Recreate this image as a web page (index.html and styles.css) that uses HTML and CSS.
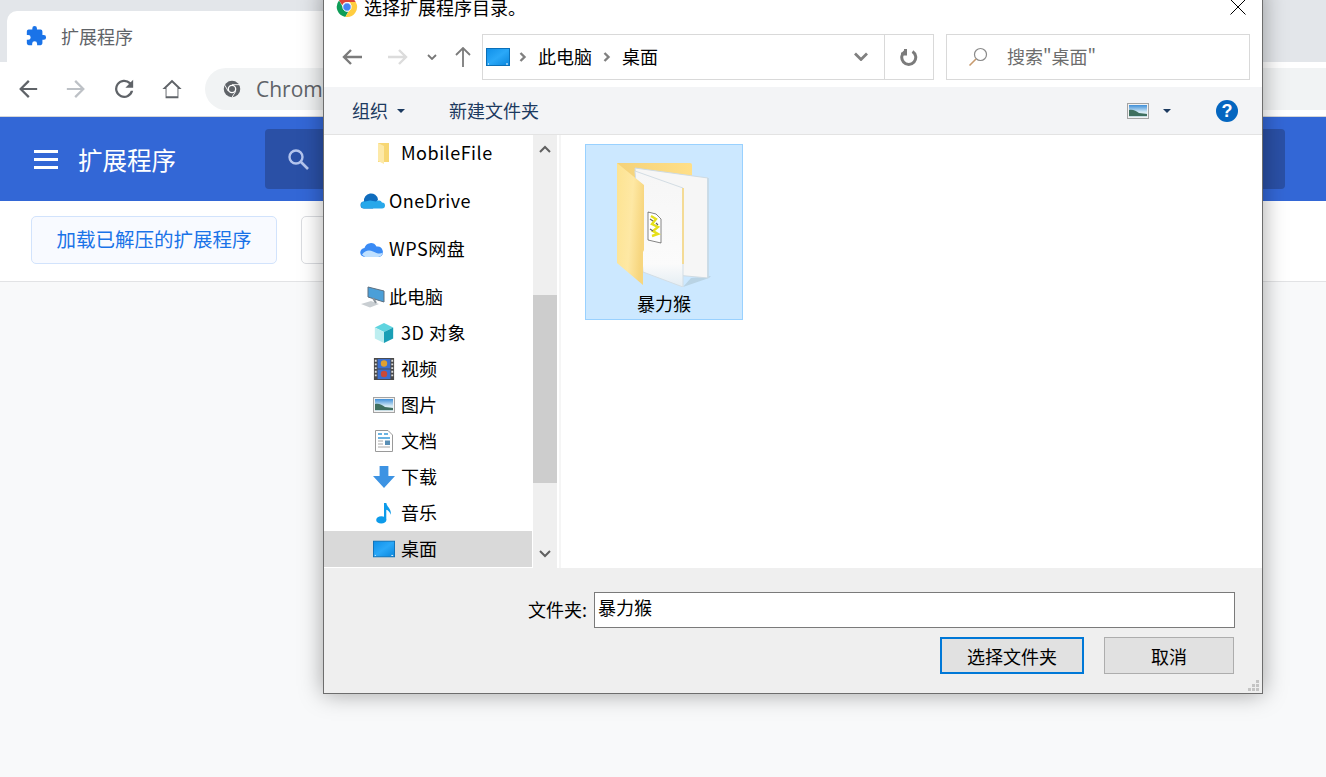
FILE: index.html
```html
<!DOCTYPE html>
<html lang="zh-CN">

<head>
    <meta charset="UTF-8">
    <meta name="viewport" content="width=device-width, initial-scale=1.0">
    <link rel="stylesheet" href="styles.css">
    <title>扩展程序</title>
</head>

<body>
    <svg class="defs" width="0" height="0">
        <defs>
            <linearGradient id="deskFill" x1="0" y1="0" x2="1" y2="1">
                <stop offset="0" stop-color="#0f8fe8" />
                <stop offset="0.5" stop-color="#2aa8f8" />
                <stop offset="1" stop-color="#0a86dc" />
            </linearGradient>
            <linearGradient id="skyFill" x1="0" y1="0" x2="0" y2="1">
                <stop offset="0" stop-color="#3f8fd8" />
                <stop offset="0.6" stop-color="#d8ecf5" />
                <stop offset="1" stop-color="#c4dbe2" />
            </linearGradient>
            <linearGradient id="flapFill" x1="0" y1="0" x2="1" y2="0.3">
                <stop offset="0" stop-color="#fde391" />
                <stop offset="0.6" stop-color="#fee8a4" />
                <stop offset="1" stop-color="#f7d67f" />
            </linearGradient>
            <linearGradient id="backFill" x1="0" y1="0" x2="1" y2="0">
                <stop offset="0" stop-color="#f4d27a" />
                <stop offset="1" stop-color="#ffdf88" />
            </linearGradient>
            <linearGradient id="pageFill" x1="0" y1="0" x2="0" y2="1">
                <stop offset="0" stop-color="#f6f6f6" />
                <stop offset="0.8" stop-color="#fbfbfb" />
                <stop offset="1" stop-color="#e4edf3" />
            </linearGradient>
            <symbol id="desk" viewBox="0 0 24 18">
                <rect x="0.5" y="0.5" width="23" height="17" fill="url(#deskFill)" stroke="#0a6fb8" />
                <path d="M2 16h1M20 16h2" stroke="#fff" />
            </symbol>
            <symbol id="photo" viewBox="0 0 22 16">
                <rect x="0.5" y="0.5" width="21" height="15" fill="#f2f2f2" stroke="#a3a3a3" />
                <rect x="2" y="2" width="18" height="12" fill="url(#skyFill)" />
                <path d="M2 7c4-1 7 1 10 3l8 1v2H2z" fill="#3f6f5f" />
            </symbol>
        </defs>
    </svg>

    <div class="browser">
        <div class="tabstrip">
            <div class="tab">
                <svg class="tab-icon" viewBox="0 0 24 24">
                    <path fill="#1a73e8" d="M20.500 11H19V7a2 2 0 0 0-2-2h-4V3.500a2.500 2.500 0 0 0-5 0V5H4a2 2 0 0 0-2 2v3.800h1.500a2.700 2.700 0 0 1 0 5.400H2V20a2 2 0 0 0 2 2h3.800v-1.500a2.700 2.700 0 0 1 5.400 0V22H17a2 2 0 0 0 2-2v-4h1.500a2.500 2.500 0 0 0 0-5z" />
                </svg>
                <span class="tab-title">扩展程序</span>
            </div>
        </div>
        <div class="toolbar">
            <svg class="nav-icon" viewBox="0 0 24 24"><path fill="#5f6368" d="M22 11H6.800l7-7L12 2.300 2.300 12 12 21.700l1.800-1.700-7-7H22z" /></svg>
            <svg class="nav-icon" viewBox="0 0 24 24"><path fill="#bdc1c6" d="M2 11h15.200l-7-7L12 2.300 21.700 12 12 21.700 10.200 20l7-7H2z" /></svg>
            <svg class="nav-icon" viewBox="0 0 24 24"><path fill="#5f6368" d="M19.300 4.700A10 10 0 1 0 22 14h-2.600a7.500 7.500 0 1 1-1.900-7.500L13.500 10.500H22V2z" /></svg>
            <svg class="nav-icon" viewBox="0 0 24 24"><path fill="#5f6368" d="M12 2 1.500 12H5v10h14V12h3.500zm0 3 6 5.700V20H6v-9.300z" /></svg>
            <div class="omnibox">
                <svg class="omni-icon" viewBox="0 0 24 24">
                    <circle cx="12" cy="12" r="11" fill="#5f6368" />
                    <circle cx="12" cy="12" r="5.800" fill="#fff" />
                    <circle cx="12" cy="12" r="4" fill="#5f6368" />
                    <path d="M12 6.200h10M7 15 2.500 7M17 15l-5 8" stroke="#fff" stroke-width="1.200" />
                </svg>
                <span class="omni-text">Chrome</span>
            </div>
        </div>
        <header class="ext-header">
            <div class="menu-btn"><span></span><span></span><span></span></div>
            <h1 class="ext-title">扩展程序</h1>
            <div class="ext-search">
                <svg class="search-icon" viewBox="0 0 24 24">
                    <circle cx="10" cy="10" r="6.500" fill="none" stroke="#b4c5ee" stroke-width="2.400" />
                    <path d="m15 15 7 7" stroke="#b4c5ee" stroke-width="2.600" />
                </svg>
            </div>
        </header>
        <div class="ext-actions">
            <button class="ext-btn ext-btn-first">加载已解压的扩展程序</button>
            <button class="ext-btn"></button>
        </div>
    </div>

    <div class="dialog">
        <div class="dlg-title">
            <svg class="dlg-logo" viewBox="0 0 24 24">
                <path fill="#db4437" d="M12 1a11 11 0 0 1 9.500 5.500H12a5.500 5.500 0 0 0-5.200 3.700L3.300 5A11 11 0 0 1 12 1z" />
                <path fill="#0f9d58" d="M3.300 5l4.800 8.400A5 5 0 0 0 13.500 17l-3.300 5.800A11 11 0 0 1 3.300 5z" />
                <path fill="#ffcd40" d="M21.500 6.500A11 11 0 0 1 10.200 22.800l4.800-8.300a5 5 0 0 0-.6-8z" />
                <circle cx="12" cy="12" r="4.600" fill="#4285f4" stroke="#fff" stroke-width="1" />
            </svg>
            <span class="dlg-title-text">选择扩展程序目录。</span>
            <svg class="dlg-close" viewBox="0 0 16 16"><path d="M.5.500l15 15M15.500.500l-15 15" stroke="#000" stroke-width="1" /></svg>
        </div>

        <div class="dlg-nav">
            <svg class="dlg-arrow" viewBox="0 0 20 16"><path d="M9 1 2 8l7 7M2 8h18" fill="none" stroke="#7b7b7b" stroke-width="2.400" /></svg>
            <svg class="dlg-arrow dlg-arrow-next" viewBox="0 0 20 16"><path d="m11 1 7 7-7 7M18 8H0" fill="none" stroke="#dcdcdc" stroke-width="2.400" /></svg>
            <svg class="dlg-recent" viewBox="0 0 10 6"><path d="m1 1 4 4 4-4" fill="none" stroke="#777" stroke-width="1.800" /></svg>
            <svg class="dlg-up" viewBox="0 0 16 20"><path d="M1 8l7-7 7 7M8 1v19" fill="none" stroke="#7b7b7b" stroke-width="1.800" /></svg>
            <div class="crumbs">
                <svg class="crumb-desk"><use href="#desk" /></svg>
                <svg class="crumb-sep" viewBox="0 0 8 10"><path d="m1.500 1 4 4-4 4" fill="none" stroke="#808080" stroke-width="2.400" /></svg>
                <span class="crumb">此电脑</span>
                <svg class="crumb-sep" viewBox="0 0 8 10"><path d="m1.500 1 4 4-4 4" fill="none" stroke="#808080" stroke-width="2.400" /></svg>
                <span class="crumb">桌面</span>
                <svg class="crumb-drop" viewBox="0 0 14 9"><path d="m1 1.500 6 6 6-6" fill="none" stroke="#808080" stroke-width="2.800" /></svg>
                <div class="crumb-refresh">
                    <svg viewBox="0 0 18 18" width="18" height="18"><path d="M5 3.500a7 7 0 1 0 7.500 0M5.500 1v5H1" fill="none" stroke="#7b7b7b" stroke-width="3" /></svg>
                </div>
            </div>
            <div class="dlg-search">
                <svg class="dlg-search-icon" viewBox="0 0 20 20"><circle cx="12.500" cy="7.500" r="6" fill="none" stroke="#8a8a8a" stroke-width="1.200" /><path d="M8 12 1.500 18.500" stroke="#c79a6e" stroke-width="1.600" /></svg>
                <span class="dlg-search-text">搜索"桌面"</span>
            </div>
        </div>

        <div class="dlg-commands">
            <span class="cmd">组织</span>
            <span class="cmd-caret"></span>
            <span class="cmd cmd-new">新建文件夹</span>
            <svg class="cmd-view"><use href="#photo" /></svg>
            <span class="cmd-caret cmd-caret-view"></span>
            <span class="cmd-help">?</span>
        </div>

        <div class="dlg-main">
            <ul class="tree">
                <li class="tree-row tree-sub tree-gap tree-latin">
                    <svg class="tree-icon" viewBox="0 0 20 22"><path d="M4 1h11v19H4z" fill="#f7d774" /><path d="M4 1l6 3v18l-6-3z" fill="#fde9a8" /></svg>
                    MobileFile
                </li>
                <li class="tree-row tree-top tree-gap tree-latin">
                    <svg class="tree-icon tree-icon-wide" viewBox="0 0 25 15"><path d="M4 8a7 7 0 0 1 14-2l-5 9H4a3.500 3.500 0 0 1 0-7z" fill="#0f6cbd" /><path d="M4 15a3.500 3.500 0 0 1 1-7l5-1 6 1a4 4 0 0 1 6 1 3 3 0 0 1 0 6z" fill="#28a8ea" /></svg>
                    OneDrive
                </li>
                <li class="tree-row tree-top tree-gap tree-latin">
                    <svg class="tree-icon tree-icon-wide" viewBox="0 0 25 17"><path d="M5 16.500a4.500 4.500 0 0 1-.5-9 6.500 6.500 0 0 1 12-1.500 5.500 5.500 0 0 1 3 10.500z" fill="#3a8bf5" /><path d="M2 14c3-4 7-5 11-3s7 3 10 1c-1 3-3 4.500-5 4.500H5z" fill="#bfe0ff" /></svg>
                    WPS网盘
                </li>
                <li class="tree-row tree-top">
                    <svg class="tree-icon tree-icon-wide" viewBox="0 0 25 22"><path d="M8 1l16 4v11L8 11z" fill="#4b9fd8" stroke="#5c6f80" /><path d="M1 18l10-3 8 3-9 3.500z" fill="#c9ced2" /><path d="M13 12l3 5" stroke="#8a9299" stroke-width="2" /></svg>
                    此电脑
                </li>
                <li class="tree-row tree-sub tree-latin">
                    <svg class="tree-icon" viewBox="0 0 24 24"><path d="M12 1l10 5-10 5L2 6z" fill="#5fd4df" /><path d="M2 6l10 5v12L2 18z" fill="#bdeef0" /><path d="M22 6 12 11v12l10-5z" fill="#1a9fb5" /></svg>
                    3D 对象
                </li>
                <li class="tree-row tree-sub">
                    <svg class="tree-icon" viewBox="0 0 22 24">
                        <rect width="22" height="24" fill="#4a4a4a" />
                        <rect x="4" y="1" width="14" height="10.500" fill="#3b6fd0" />
                        <rect x="4" y="12.500" width="14" height="10.500" fill="#3b6fd0" />
                        <circle cx="11" cy="6" r="3.500" fill="#e0a030" />
                        <circle cx="11" cy="17.500" r="3.500" fill="#c94a3a" />
                        <path d="M2 2v20M20 2v20" stroke="#ddd" stroke-width="2" stroke-dasharray="2 2" />
                    </svg>
                    视频
                </li>
                <li class="tree-row tree-sub">
                    <svg class="tree-icon"><use href="#photo" /></svg>
                    图片
                </li>
                <li class="tree-row tree-sub">
                    <svg class="tree-icon" viewBox="0 0 18 22">
                        <path d="M.5.500H13L17.500 5v16.500H.5z" fill="#fff" stroke="#9a9a9a" />
                        <path d="M3 4h4M9 4h4M3 8h12" stroke="#3a9ad9" stroke-width="1.500" />
                        <path d="M3 11h5M3 14h5M3 17h12" stroke="#a8a8a8" />
                        <rect x="10" y="10.500" width="5" height="4.500" fill="#5a8fb5" />
                    </svg>
                    文档
                </li>
                <li class="tree-row tree-sub">
                    <svg class="tree-icon" viewBox="0 0 20 20"><path d="M6 0h8v9h6L10 20 0 9h6z" fill="#3d93e3" /></svg>
                    下载
                </li>
                <li class="tree-row tree-sub">
                    <svg class="tree-icon" viewBox="0 0 18 24"><ellipse cx="6" cy="19.500" rx="5.500" ry="4" fill="#0d9bea" /><path d="M9 1h2.500c.5 4 5.500 6 5 13-1-3-3-5-5-5.500V20H9z" fill="#0d9bea" /></svg>
                    音乐
                </li>
                <li class="tree-row tree-sub tree-selected">
                    <svg class="tree-icon"><use href="#desk" /></svg>
                    桌面
                </li>
            </ul>
            <div class="tree-scroll">
                <svg class="scroll-arrow" viewBox="0 0 12 8"><path d="m1 7 5-5 5 5" fill="none" stroke="#606060" stroke-width="2" /></svg>
                <div class="scroll-track"><div class="scroll-thumb"></div></div>
                <svg class="scroll-arrow" viewBox="0 0 12 8"><path d="m1 1 5 5 5-5" fill="none" stroke="#606060" stroke-width="2" /></svg>
            </div>
            <div class="files">
                <div class="file-item">
                    <svg class="file-icon" viewBox="0 0 94 124">
                        <!-- back of the folder -->
                        <path d="M0 0h73a2 2 0 0 1 2 2v20H0z" fill="url(#backFill)" />
                        <!-- shadow, back page, front page -->
                        <path d="M66 124l26-9 2-2-20 2z" fill="#b9d3e4" />
                        <path d="M18 5l73 10v100l-65-6z" fill="#f6f6f6" stroke="#cfdbe3" />
                        <path d="M91 15v100" stroke="#c5d9e6" stroke-width="1.500" />
                        <path d="M18 8l48 17v99l-40-15z" fill="url(#pageFill)" stroke="#d3dde4" />
                        <path d="M66 25v76" stroke="#f8d678" stroke-width="1.500" />
                        <!-- front flap -->
                        <path d="M0 0l27 22v65l-1 2v33L0 100z" fill="url(#flapFill)" />
                        <!-- thumbnail of the script file -->
                        <path d="M31 49l8 2 5 5v24l-13-3z" fill="#fff" stroke="#333" stroke-width="0.600" />
                        <path d="M34 53l5 3-4 5 6 3-5 4 5 3-6 2" fill="none" stroke="#e6e01c" stroke-width="2.400" />
                        <path d="M33 56l3 2M39 60l2 2M33 66l3 2" fill="none" stroke="#666" stroke-width="1.200" />
                    </svg>
                    <span class="file-name">暴力猴</span>
                </div>
            </div>
        </div>

        <div class="dlg-bottom">
            <div class="name-row">
                <label class="name-label" for="folderName">文件夹:</label>
                <input class="name-input" id="folderName" type="text" value="暴力猴">
            </div>
            <div class="btn-row">
                <button class="dlg-btn dlg-btn-primary">选择文件夹</button>
                <button class="dlg-btn dlg-btn-cancel">取消</button>
            </div>
            <svg class="grip" viewBox="0 0 11 11">
                <path d="M8 0h3v3H8zM4 4h3v3H4zM8 4h3v3H8zM0 8h3v3H0zM4 8h3v3H4zM8 8h3v3H8z" fill="#c4c4c4" />
            </svg>
        </div>
    </div>
</body>

</html>
```

FILE: styles.css
```css
* {
    box-sizing: border-box;
}

html,
body {
    height: 100%;
}

body {
    margin: 0;
    overflow: hidden;
    background-color: #f8f9fa;
    font-family: "Noto Sans CJK SC", "Noto Sans", sans-serif;
    color: #000;
}

.defs {
    position: absolute;
}

/* chrome behind the dialog */
.tabstrip {
    height: 62px;
    padding: 11px 0 0 7px;
    background-color: #e3e6ea;
}

.tab {
    display: flex;
    align-items: center;
    width: 500px;
    height: 51px;
    padding: 0 0 2px 18px;
    background-color: #fff;
    border-radius: 10px 10px 0 0;
}

.tab-icon {
    width: 22px;
    height: 22px;
}

.tab-title {
    margin-left: 14px;
    font-size: 18px;
    color: #5f6368;
}

.toolbar {
    display: flex;
    align-items: center;
    height: 55px;
    padding: 0 0 0 17px;
    background-color: #fff;
    border-bottom: 1px solid #d5d6d8;
}

.nav-icon {
    width: 22px;
    height: 22px;
    margin-right: 26px;
}

.omnibox {
    display: flex;
    align-items: center;
    flex: 1;
    height: 42px;
    margin-left: -4px;
    padding-left: 18px;
    background-color: #f1f3f4;
    border-radius: 21px 0 0 21px;
}

.omni-icon {
    width: 18px;
    height: 18px;
}

.omni-text {
    margin-left: 15px;
    font-family: "Open Sans", sans-serif;
    font-size: 21px;
    color: #5f6368;
}

.ext-header {
    display: flex;
    align-items: center;
    height: 84px;
    padding: 0 41px 0 34px;
    background-color: #3367d6;
}

.menu-btn {
    display: flex;
    flex-direction: column;
    gap: 5px;
    width: 24px;
}

.menu-btn span {
    height: 3px;
    background-color: #fff;
}

.ext-title {
    width: 187px;
    margin: 0 0 0 20px;
    font-size: 24.500px;
    font-weight: 400;
    color: #fff;
}

.ext-search {
    display: flex;
    align-items: center;
    flex: 1;
    height: 60px;
    padding-left: 21px;
    background-color: #2a50a6;
    border-radius: 4px;
}

.search-icon {
    width: 24px;
    height: 24px;
}

.ext-actions {
    display: flex;
    align-items: center;
    gap: 24px;
    height: 81px;
    padding: 0 31px 2px;
    background-color: #fff;
    border-bottom: 1px solid #e2e3e5;
}

.ext-btn {
    width: 246px;
    height: 48px;
    padding: 0 0 3px;
    font-family: inherit;
    font-size: 19.500px;
    color: #1a73e8;
    background-color: #fff;
    border: 1px solid #dadce0;
    border-radius: 5px;
}

.ext-btn-first {
    background-color: #f8faff;
    border-color: #d2e3fc;
}

/* file dialog */
.dialog {
    position: absolute;
    left: 323px;
    top: -13px;
    display: flex;
    flex-direction: column;
    width: 940px;
    height: 707px;
    background-color: #fff;
    border: 1px solid #6d6d6d;
    box-shadow: 0 0 22px rgba(0, 0, 0, 0.35);
}

.dlg-title {
    display: flex;
    align-items: center;
    height: 40px;
    padding: 0 16px 2px 12px;
}

.dlg-logo {
    width: 22px;
    height: 22px;
}

.dlg-title-text {
    margin-left: 6px;
    font-size: 18px;
}

.dlg-close {
    width: 16px;
    height: 16px;
    margin-left: auto;
}

.dlg-nav {
    display: flex;
    align-items: center;
    height: 53px;
    margin: 2px 0 4px;
    padding: 0 12px 0 18px;
}

.dlg-arrow {
    width: 20px;
    height: 16px;
}

.dlg-arrow-next {
    margin-left: 26px;
}

.dlg-recent {
    width: 10px;
    height: 6px;
    margin-left: 19px;
}

.dlg-up {
    width: 16px;
    height: 20px;
    margin-left: 18px;
}

.crumbs {
    display: flex;
    align-items: center;
    width: 452px;
    height: 46px;
    margin-left: 11px;
    padding-left: 3px;
    border: 1px solid #d9d9d9;
    font-size: 18px;
}

.crumb {
    margin-top: -2px;
}

.crumb-desk {
    width: 24px;
    height: 18px;
}

.crumb-sep {
    width: 8px;
    height: 10px;
    margin: 0 11px 0 9px;
}

.crumb-sep + .crumb + .crumb-sep {
    margin-left: 11px;
}

.crumb-drop {
    width: 14px;
    height: 9px;
    margin-left: auto;
    margin-right: 16px;
}

.crumb-refresh {
    display: flex;
    align-items: center;
    justify-content: center;
    width: 49px;
    height: 44px;
    border-left: 1px solid #d9d9d9;
}

.dlg-search {
    display: flex;
    align-items: center;
    width: 304px;
    height: 46px;
    margin-left: 12px;
    padding-left: 21px;
    border: 1px solid #d9d9d9;
}

.dlg-search-icon {
    width: 20px;
    height: 20px;
}

.dlg-search-text {
    margin-top: -2px;
    margin-left: 19px;
    font-size: 18px;
    color: #6d6d6d;
}

.dlg-commands {
    display: flex;
    align-items: center;
    height: 48px;
    padding: 0 24px 0 28px;
    background-color: #f3f4f6;
    border-bottom: 1px solid #e3e3e3;
    font-size: 18px;
    color: #1c3a60;
}

.cmd {
    margin-top: -2px;
}

.cmd-caret {
    width: 0;
    height: 0;
    margin-left: 9px;
    border: 4px solid transparent;
    border-top: 4px solid #1c3a60;
    border-bottom: 0;
}

.cmd-new {
    margin-left: 44px;
}

.cmd-view {
    width: 22px;
    height: 16px;
    margin-left: auto;
}

.cmd-caret-view {
    margin-left: 14px;
}

.cmd-help {
    width: 22px;
    height: 22px;
    margin-left: 45px;
    border-radius: 50%;
    background-color: #0466c0;
    color: #fff;
    font-family: "Liberation Sans", sans-serif;
    font-size: 18px;
    font-weight: 700;
    line-height: 22px;
    text-align: center;
}

.dlg-main {
    display: flex;
    height: 433px;
}

.tree {
    flex: none;
    width: 209px;
    height: 433px;
    margin: 0;
    padding: 0;
    overflow: hidden;
    list-style: none;
    font-size: 18px;
}

.tree-row {
    display: flex;
    align-items: center;
    height: 36px;
    padding-bottom: 2px;
}

.tree-gap {
    margin-bottom: 12px;
}

.tree-latin {
    letter-spacing: 0.500px;
}

.tree-top {
    padding-left: 36px;
}

.tree-sub {
    padding-left: 49px;
}

.tree-icon {
    flex: none;
    width: 22px;
    height: 22px;
    margin-top: 2px;
    margin-right: 6px;
}

.tree-icon-wide {
    width: 25px;
    margin-right: 4px;
}

.tree-selected {
    background-color: #d9d9d9;
    margin-right: 1px;
}

.tree-scroll {
    display: flex;
    flex-direction: column;
    flex: none;
    width: 24px;
    margin-right: 2px;
    background-color: #efefef;
}

.scroll-arrow {
    flex: none;
    width: 12px;
    height: 8px;
    margin: 10px 6px;
}

.scroll-track {
    flex: 1;
}

.scroll-thumb {
    height: 188px;
    margin-top: 132px;
    background-color: #cdcdcd;
}

.files {
    flex: 1;
    padding: 9px 0 0 24px;
    border-left: 2px solid #f5f5f5;
}

.file-item {
    display: flex;
    flex-direction: column;
    align-items: center;
    width: 158px;
    height: 176px;
    padding-top: 18px;
    background-color: #cce8ff;
    border: 1px solid #99d1ff;
}

.file-icon {
    flex: none;
    width: 94px;
    height: 124px;
}

.file-name {
    margin-top: 4px;
    font-size: 18px;
    line-height: 24px;
}

.dlg-bottom {
    position: relative;
    flex: 1;
    padding: 24px 27px 0 204px;
    background-color: #efefef;
}

.name-row {
    display: flex;
    align-items: center;
}

.name-label {
    width: 66px;
    padding-bottom: 2px;
    font-size: 18px;
}

.name-input {
    flex: 1;
    height: 36px;
    padding: 0 3px 6px;
    font-family: inherit;
    font-size: 18px;
    background-color: #fff;
    border: 1px solid #7a7a7a;
    border-radius: 0;
    outline: none;
}

.btn-row {
    display: flex;
    justify-content: flex-end;
    gap: 20px;
    margin-top: 9px;
    padding-right: 1px;
}

.dlg-btn {
    height: 37px;
    padding: 0;
    font-family: inherit;
    font-size: 18px;
    background-color: #e1e1e1;
}

.dlg-btn-primary {
    width: 144px;
    border: 2px solid #0078d7;
}

.dlg-btn-cancel {
    width: 130px;
    border: 1px solid #adadad;
}

.grip {
    position: absolute;
    right: 3px;
    bottom: 2px;
    width: 11px;
    height: 11px;
}
```
